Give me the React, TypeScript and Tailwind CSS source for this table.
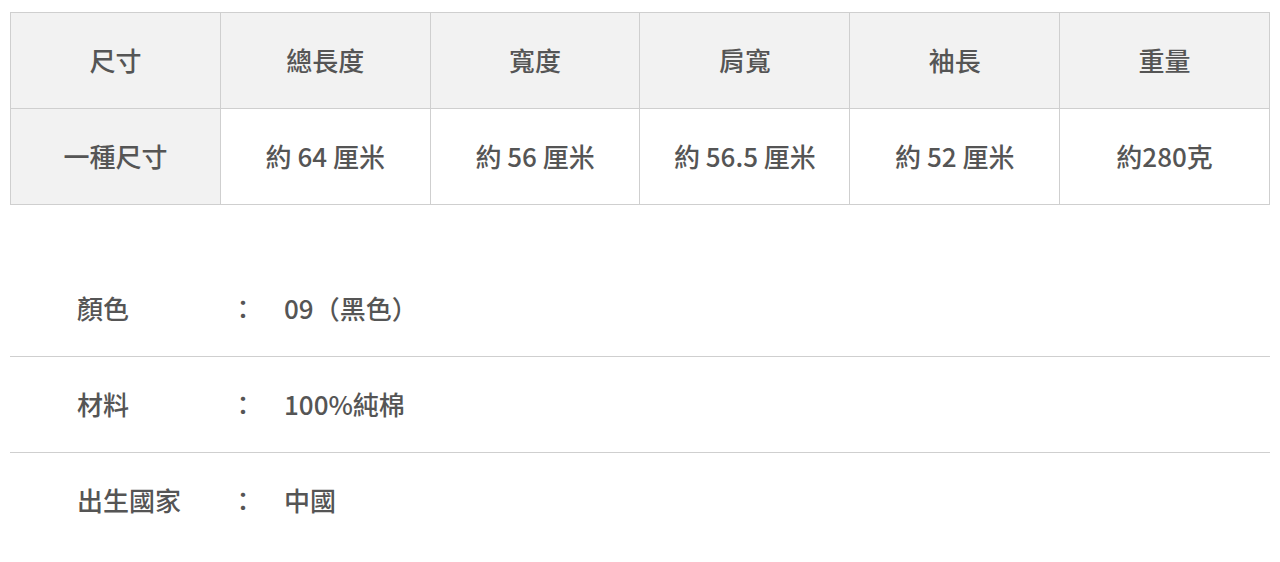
const headers = ['尺寸', '總長度', '寬度', '肩寬', '袖長', '重量']
const values = ['一種尺寸', '約 64 厘米', '約 56 厘米', '約 56.5 厘米', '約 52 厘米', '約280克']

const specs = [
  { label: '顏色', value: '09（黑色）' },
  { label: '材料', value: '100%純棉' },
  { label: '出生國家', value: '中國' },
]

export default function App() {
  return (
    <div
      className="min-h-[562px] bg-white px-[10px] pt-[12px] text-[#555] font-medium"
      style={{ fontFamily: '"Noto Sans CJK TC", "Noto Sans", sans-serif' }}
    >
      <table className="w-full table-fixed border-collapse text-[26px]">
        <tbody>
          <tr className="h-[96px] bg-[#f2f2f2]">
            {headers.map((h) => (
              <th key={h} className="border border-[#cfcfcf] pb-[3px] text-center font-medium">
                {h}
              </th>
            ))}
          </tr>
          <tr className="h-[96px]">
            {values.map((v, i) => (
              <td
                key={v}
                className={`border border-[#cfcfcf] pb-[3px] text-center ${i === 0 ? 'bg-[#f2f2f2]' : 'bg-white'}`}
              >
                {v}
              </td>
            ))}
          </tr>
        </tbody>
      </table>

      <div className="mt-[56px] text-[26px]">
        {specs.map((s, i) => (
          <div
            key={s.label}
            className={`flex h-[96px] items-center pb-[3px] pl-[67px] ${i < specs.length - 1 ? 'border-b border-[#cfcfcf]' : ''}`}
          >
            <span className="w-[153px]">{s.label}</span>
            <span className="w-[54px]">：</span>
            <span>{s.value}</span>
          </div>
        ))}
      </div>
    </div>
  )
}
